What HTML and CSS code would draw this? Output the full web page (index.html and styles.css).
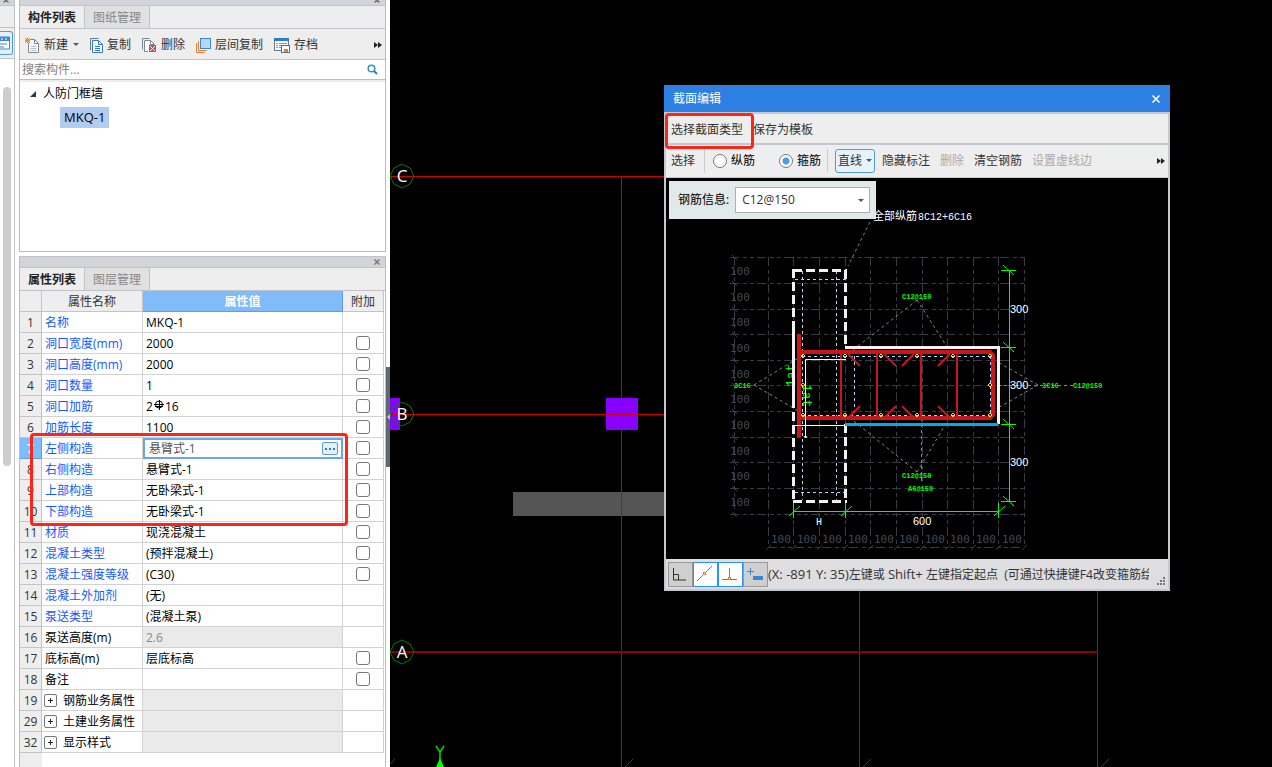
FILE: index.html
```html
<!DOCTYPE html>
<html lang="zh-CN">
<head>
    <meta charset="UTF-8">
    <meta name="viewport" content="width=device-width, initial-scale=1.0">
    <title>截面编辑</title>
    <link rel="stylesheet" href="styles.css">
</head>
<body>
    <!-- Edge of the navigation panel -->
    <aside class="nav-strip">
        <div class="panel-bar panel-bar-cut"><button class="bar-close" aria-label="关闭"><svg width="6" height="6" viewBox="0 0 6 6"><path d="M0.5 0.5L5.5 5.5M5.5 0.5L0.5 5.5"/></svg></button></div>
        <div class="nav-head"></div>
        <div class="nav-tools">
            <button class="nav-btn" aria-label="视图">
                <svg width="10" height="14" viewBox="0 0 10 14"><path d="M0 1h9.500v12H0" fill="#fff" stroke="#3c86d8"/><path d="M0 1h9v4H0z" fill="#3c86d8"/><path d="M1 3h2M5 3h2" stroke="#fff"/><path d="M0 8h7M0 11h4" stroke="#3c86d8"/></svg>
            </button>
        </div>
        <div class="nav-scroll"><div class="nav-thumb"></div></div>
    </aside>

    <div class="side">
        <!-- Component list -->
        <section class="panel panel-list">
            <div class="panel-bar panel-bar-cut"><button class="bar-close" aria-label="关闭"><svg width="6" height="6" viewBox="0 0 6 6"><path d="M0.5 0.5L5.5 5.5M5.5 0.5L0.5 5.5"/></svg></button></div>
            <div class="tabs">
                <button class="tab active">构件列表</button>
                <button class="tab">图纸管理</button>
            </div>
            <div class="toolbar">
                <button class="tool">
                    <svg width="15" height="15" viewBox="0 0 15 15"><path d="M3.5 1.500h6l4 4v9h-10z" fill="#fff" stroke="#7c8796"/><path d="M9.5 1.500v4h4" fill="none" stroke="#7c8796"/><path d="M5.500 8.500h6M5.500 10.500h6M5.500 12.500h6" stroke="#b8bfc8"/><path d="M0 0h5v5H0z" fill="#fbd9b4"/><path d="M0 0l5 5M5 0L0 5M2.500 0v5M0 2.500h5" stroke="#f08a24"/></svg>
                    新建
                    <svg width="6" height="4" viewBox="0 0 6 4"><path d="M0 0h6L3 3z" fill="#555"/></svg>
                </button>
                <button class="tool">
                    <svg width="13" height="15" viewBox="0 0 13 15"><path d="M0.500 12V0.500h8" fill="none" stroke="#6b7a8c"/><path d="M2.500 2.500h6l4 4v8h-10z" fill="#fff" stroke="#2f7bd2"/><path d="M8.500 2.500v4h4" fill="none" stroke="#2f7bd2"/><path d="M5 8.500h5M5 10.500h5M5 12.500h5" stroke="#2f7bd2"/></svg>
                    复制
                </button>
                <button class="tool">
                    <svg width="15" height="15" viewBox="0 0 15 15"><path d="M0.500 11.500v-11h7" fill="none" stroke="#7c8796"/><path d="M6 13.500H2.500v-11h6l4 4" fill="#fff" stroke="#7c8796"/><path d="M8.500 2.500v4h4" fill="none" stroke="#7c8796"/><rect x="7" y="7" width="7" height="7" fill="#d4454a"/><path d="M8 8l5 5M13 8l-5 5" stroke="#fff"/></svg>
                    删除
                </button>
                <button class="tool">
                    <svg width="15" height="15" viewBox="0 0 15 15"><path d="M0.500 5v9.500h8M2.500 3v9.500h8" fill="none" stroke="#ee8130"/><rect x="4.500" y="0.500" width="10" height="10" fill="#b5d7fb" stroke="#3c86d8"/></svg>
                    层间复制
                </button>
                <button class="tool">
                    <svg width="16" height="15" viewBox="0 0 16 15"><rect x="0.500" y="0.500" width="14" height="12" fill="#fff" stroke="#6b7a8c"/><rect width="15" height="3" fill="#2f7bd2"/><path d="M2 5.500h2M5 5.500h8M2 7.500h2M5 7.500h2M2 9.500h2M5 9.500h2" stroke="#6b9bd0"/><rect x="7.500" y="7.500" width="8" height="7" fill="#fff" stroke="#5b6f88"/><rect x="10" y="11" width="4" height="3" fill="#ee7b22"/></svg>
                    存档
                </button>
                <button class="tool-more" aria-label="更多"><svg width="8" height="6" viewBox="0 0 8 6"><path d="M0 0l4 3-4 3zM4 0l4 3-4 3z" fill="#222"/></svg></button>
            </div>
            <div class="search">
                <input type="text" class="search-input" placeholder="搜索构件..." aria-label="搜索构件">
                <svg width="11" height="11" viewBox="0 0 11 11"><circle cx="4.500" cy="4.500" r="3.300" fill="none" stroke="#2e90cf" stroke-width="1.500"/><path d="M7 7l3 3" stroke="#2e7fc0" stroke-width="2"/></svg>
            </div>
            <ul class="tree">
                <li class="tree-root">
                    <svg width="6" height="6" viewBox="0 0 6 6"><path d="M6 0v6H0z" fill="#333"/></svg>
                    人防门框墙
                </li>
                <li class="tree-leaf"><span class="selected">MKQ-1</span></li>
            </ul>
        </section>

        <!-- Property list -->
        <section class="panel panel-props">
            <div class="panel-bar"><button class="bar-close" aria-label="关闭"><svg width="6" height="6" viewBox="0 0 6 6"><path d="M0.5 0.5L5.5 5.5M5.5 0.5L0.5 5.5"/></svg></button></div>
            <div class="tabs">
                <button class="tab active">属性列表</button>
                <button class="tab">图层管理</button>
            </div>
            <div class="props-body">
                <table class="props">
                    <thead>
                        <tr><th class="num"></th><th class="name">属性名称</th><th class="value current">属性值</th><th class="extra">附加</th></tr>
                    </thead>
                    <tbody>
                        <tr><th>1</th><td class="blue">名称</td><td>MKQ-1</td><td></td></tr>
                        <tr><th>2</th><td class="blue">洞口宽度(mm)</td><td>2000</td><td class="check"><input type="checkbox" aria-label="附加 洞口宽度"></td></tr>
                        <tr><th>3</th><td class="blue">洞口高度(mm)</td><td>2000</td><td class="check"><input type="checkbox" aria-label="附加 洞口高度"></td></tr>
                        <tr><th>4</th><td class="blue">洞口数量</td><td>1</td><td class="check"><input type="checkbox" aria-label="附加 洞口数量"></td></tr>
                        <tr><th>5</th><td class="blue">洞口加筋</td><td>2<svg class="rebar" width="12" height="11" viewBox="0 0 12 11"><ellipse cx="6" cy="4.500" rx="3.500" ry="3.500" fill="none" stroke="#000"/><path d="M6.500 0v10M1 4.500h10M2 6.500h8" stroke="#000"/></svg>16</td><td class="check"><input type="checkbox" aria-label="附加 洞口加筋"></td></tr>
                        <tr><th>6</th><td class="blue">加筋长度</td><td>1100</td><td class="check"><input type="checkbox" aria-label="附加 加筋长度"></td></tr>
                        <tr><th class="current">7</th><td class="blue">左侧构造</td><td class="editing"><div class="edit-box"><input type="text" class="edit-input" value="悬臂式-1" aria-label="左侧构造"><button class="edit-more" aria-label="选择"><svg width="10" height="2" viewBox="0 0 10 2"><path d="M0 1h2M4 1h2M8 1h2" stroke="#2c7cc4" stroke-width="2"/></svg></button></div></td><td class="check"><input type="checkbox" aria-label="附加 左侧构造"></td></tr>
                        <tr><th>8</th><td class="blue">右侧构造</td><td>悬臂式-1</td><td class="check"><input type="checkbox" aria-label="附加 右侧构造"></td></tr>
                        <tr><th>9</th><td class="blue">上部构造</td><td>无卧梁式-1</td><td class="check"><input type="checkbox" aria-label="附加 上部构造"></td></tr>
                        <tr><th>10</th><td class="blue">下部构造</td><td>无卧梁式-1</td><td class="check"><input type="checkbox" aria-label="附加 下部构造"></td></tr>
                        <tr><th>11</th><td class="blue">材质</td><td>现浇混凝土</td><td class="check"><input type="checkbox" aria-label="附加 材质"></td></tr>
                        <tr><th>12</th><td class="blue">混凝土类型</td><td>(预拌混凝土)</td><td class="check"><input type="checkbox" aria-label="附加 混凝土类型"></td></tr>
                        <tr><th>13</th><td class="blue">混凝土强度等级</td><td>(C30)</td><td class="check"><input type="checkbox" aria-label="附加 混凝土强度等级"></td></tr>
                        <tr><th>14</th><td class="blue">混凝土外加剂</td><td>(无)</td><td></td></tr>
                        <tr><th>15</th><td class="blue">泵送类型</td><td>(混凝土泵)</td><td></td></tr>
                        <tr><th>16</th><td>泵送高度(m)</td><td class="locked">2.6</td><td></td></tr>
                        <tr><th>17</th><td>底标高(m)</td><td>层底标高</td><td class="check"><input type="checkbox" aria-label="附加 底标高"></td></tr>
                        <tr><th>18</th><td>备注</td><td></td><td class="check"><input type="checkbox" aria-label="附加 备注"></td></tr>
                        <tr><th>19</th><td class="group"><div class="group-name"><button class="expand" aria-label="展开"><svg width="7" height="7" viewBox="0 0 7 7"><path d="M3.500 1v5M1 3.500h5" stroke="#222"/></svg></button>钢筋业务属性</div></td><td class="locked"></td><td></td></tr>
                        <tr><th>29</th><td class="group"><div class="group-name"><button class="expand" aria-label="展开"><svg width="7" height="7" viewBox="0 0 7 7"><path d="M3.500 1v5M1 3.500h5" stroke="#222"/></svg></button>土建业务属性</div></td><td class="locked"></td><td></td></tr>
                        <tr><th>32</th><td class="group"><div class="group-name"><button class="expand" aria-label="展开"><svg width="7" height="7" viewBox="0 0 7 7"><path d="M3.500 1v5M1 3.500h5" stroke="#222"/></svg></button>显示样式</div></td><td class="locked"></td><td></td></tr>
                    </tbody>
                </table>
                <div class="props-rest"></div>
            </div>
            <div class="mark mark-rows"></div>
        </section>
    </div>

    <div class="splitter"><button class="splitter-handle" aria-label="收起"><svg width="3" height="6" viewBox="0 0 3 6"><path d="M3 0v6L0 3z" fill="#c4c9ce"/></svg></button></div>

    <main class="canvas">
        <!-- Plan view with the axis grid -->
        <svg class="plan" width="100%" height="100%">
            <g transform="translate(-390 0)">
                <rect x="390" y="398" width="10" height="32" fill="#8800ff"/>
                <rect x="606" y="398" width="32" height="32" fill="#8800ff"/>
                <rect x="513" y="492" width="180" height="24" fill="#555"/>
                <g stroke="#d00000">
                    <path d="M390 176.500H1097M390 414.500H1097M621.500 176V652M859.500 176V652M1097.500 176V652"/>
                </g>
                <path d="M390 652H1098" stroke="#8c0000" stroke-width="2"/>
                <path d="M621.500 653V767M859.500 653V767M1097.500 653V767M390 764l5-5M625 767l8-8M863 767l8-8M1101 767l8-8" stroke="#006400" fill="none"/>
                <g fill="none" stroke="#008000">
                    <path id="axis" d="M402 164l8 4 4 8-4 8-8 4-8-4-4-8 4-8z"/>
                    <use href="#axis" y="238"/>
                    <use href="#axis" y="476"/>
                </g>
                <g class="axis-label">
                    <text x="402" y="182">C</text>
                    <text x="402" y="420">B</text>
                    <text x="402" y="658">A</text>
                </g>
                <path d="M436 746l4 6 4-6M440 752v8" fill="none" stroke="#00e000" stroke-width="1.500"/>
                <path d="M440 758l4 9h-8z" fill="#00ff00"/>
            </g>
        </svg>

        <!-- Section editor window -->
        <div class="dialog">
            <div class="dialog-title">
                <span>截面编辑</span>
                <button class="dialog-close" aria-label="关闭"><svg width="8" height="8" viewBox="0 0 8 8"><path d="M0.500 0.500l7 7M7.500 0.500l-7 7" stroke="#fff" stroke-width="1.500"/></svg></button>
            </div>
            <div class="dialog-menu">
                <button class="menu-btn">选择截面类型</button>
                <button class="menu-btn">保存为模板</button>
            </div>
            <div class="dialog-tools">
                <button class="menu-btn">选择</button>
                <span class="sep"></span>
                <label class="radio"><input type="radio" name="bar">纵筋</label>
                <label class="radio"><input type="radio" name="bar" checked>箍筋</label>
                <span class="sep"></span>
                <button class="line-btn">直线 <svg width="6" height="4" viewBox="0 0 6 4"><path d="M0 0h6L3 3z" fill="#555"/></svg></button>
                <button class="menu-btn">隐藏标注</button>
                <button class="menu-btn" disabled>删除</button>
                <button class="menu-btn">清空钢筋</button>
                <button class="menu-btn" disabled>设置虚线边</button>
                <button class="tool-more" aria-label="更多"><svg width="8" height="6" viewBox="0 0 8 6"><path d="M0 0l4 3-4 3zM4 0l4 3-4 3z" fill="#222"/></svg></button>
            </div>
            <div class="section-view">
                <svg class="section" width="502" height="381" viewBox="666 178 502 381">
                    <!-- background grid, 100 mm -->
                    <g stroke="#353c49" fill="none">
                        <path stroke-dasharray="9 4 4 3 4 3" d="M768.500 257V547M793.500 257V547M819.500 257V547M845.500 257V547M870.500 257V547M896.500 257V547M922.500 257V547M947.500 257V547M973.500 257V547M998.500 257V547M1024.500 257V547"/>
                        <path stroke-dasharray="9 4 4 3 4 3" d="M730 257.500H1024M730 283.500H1024M730 309.500H1024M730 334.500H1024M730 360.500H1024M730 385.500H1024M730 411.500H1024M730 437.500H1024M730 462.500H1024M730 488.500H1024M730 514.500H1024"/>
                        <path stroke-dasharray="9 4 4 3 4 3" d="M734.500 257V514M768 547.500H1024"/>
                        <path d="M732 255l5 5M732 281l5 5M732 307l5 5M732 332l5 5M732 358l5 5M732 383l5 5M732 409l5 5M732 435l5 5M732 460l5 5M732 486l5 5M732 512l5 5"/>
                        <path d="M766 550l5-5M791 550l5-5M817 550l5-5M843 550l5-5M868 550l5-5M894 550l5-5M920 550l5-5M945 550l5-5M971 550l5-5M996 550l5-5M1022 550l5-5"/>
                    </g>
                    <g class="grid-text">
                        <text x="730" y="275">100</text><text x="730" y="301">100</text><text x="730" y="326">100</text><text x="730" y="352">100</text><text x="730" y="378">100</text>
                        <text x="730" y="403">100</text><text x="730" y="429">100</text><text x="730" y="455">100</text><text x="730" y="480">100</text><text x="730" y="506">100</text>
                        <text x="771" y="543">100</text><text x="797" y="543">100</text><text x="822" y="543">100</text><text x="848" y="543">100</text><text x="874" y="543">100</text>
                        <text x="899" y="543">100</text><text x="925" y="543">100</text><text x="950" y="543">100</text><text x="976" y="543">100</text><text x="1002" y="543">100</text>
                    </g>

                    <!-- leaders -->
                    <g stroke="#858585" fill="none" stroke-dasharray="3 3">
                        <path d="M870 222L848 266M917 300L848 354M917 300L951 353M917 472L850 418M917 472L951 415M754 385L800 357M754 385L800 412M1038 385L996 361M1038 385L996 409M992 385.500H1073M921.500 412V484"/>
                    </g>

                    <!-- cover lines -->
                    <path d="M802.500 271V500M836.500 271V500M854.500 356V422M990.500 350V420M795 279.500H846M795 492.500H846M802 356.500H992M802 415.500H992" stroke="#b4d2f2" fill="none" stroke-dasharray="3 3"/>

                    <!-- stirrups -->
                    <g stroke="#c8161d" fill="none">
                        <path d="M799 334V437" stroke-width="4"/>
                        <path d="M797 352H990l3 3V415l-3 3H797" stroke-width="4"/>
                        <path d="M841 352V418M877 352V418M921 352V418M957 352V418" stroke-width="2"/>
                        <path d="M848 354l12 12M884 354l12 12M914 354l-12 12M950 354l-12 12M848 418l12-12M884 418l12-12M914 418l-12-12M950 418l-12-12" stroke-width="2"/>
                    </g>
                    <g stroke="#ffd820" fill="none">
                        <path d="M845 354l2 2-2 2-2-2zM881 354l2 2-2 2-2-2zM917 354l2 2-2 2-2-2zM953 354l2 2-2 2-2-2zM990 354l2 2-2 2-2-2zM803 354l2 2-2 2-2-2z"/>
                        <path d="M845 413l2 2-2 2-2-2zM881 413l2 2-2 2-2-2zM917 413l2 2-2 2-2-2zM953 413l2 2-2 2-2-2zM990 413l2 2-2 2-2-2zM803 413l2 2-2 2-2-2z"/>
                        <path d="M990 383l2 2-2 2-2-2zM803 383l2 2-2 2-2-2z"/>
                    </g>

                    <g class="bar-text">
                        <text x="902" y="299">C12@150</text>
                        <text x="902" y="478">C12@150</text>
                        <text x="908" y="491">A6@150</text>
                        <text x="734" y="388">3C16</text>
                        <text x="1042" y="388">3C16</text>
                        <text x="1073" y="388">C12@150</text>
                        <text class="anchor" transform="translate(795 387) rotate(-90)">1at</text>
                        <text class="anchor" transform="translate(803 384) rotate(90)">1at</text>
                    </g>

                    <!-- concrete outline -->
                    <g stroke="#f2f2f2" stroke-width="3" fill="none">
                        <path d="M793.500 269V502M793 270.500H847M845.500 270V347M845.500 424V502M793 501.500H847" stroke-dasharray="9 4"/>
                        <path d="M793.500 330V408M845 347.500H998.500V424"/>
                        <path d="M845 424.500H998" stroke="#00a8ec"/>
                    </g>
                    <path d="M805.500 438V359.500H846M793 425.500H845M804 436l1.500 2 1.500-2" stroke="#fff" fill="none"/>

                    <!-- dimensions -->
                    <g stroke="#00ff00" fill="none">
                        <path d="M1009.500 270V502M1001 270.500h15M1001 347.500h15M1001 424.500h15M1001 501.500h15M1003 265l11 10M1003 342l11 10M1003 419l11 10M1003 496l11 10"/>
                        <path d="M793 511.500H998M793.500 503v15M845.500 503v15M998.500 503v15M789 516l11-10M841 516l11-10M994 516l11-10"/>
                    </g>
                    <g class="dim-text">
                        <text x="1010" y="313">300</text>
                        <text x="1010" y="389">300</text>
                        <text x="1010" y="466">300</text>
                        <text x="913" y="525">600</text>
                        <text x="816" y="525" class="mono">H</text>
                        <text x="873" y="220" class="note">全部纵筋</text>
                        <text x="918" y="220" class="mono">8C12+6C16</text>
                    </g>
                </svg>
                <div class="bar-info">
                    <label for="barInfo">钢筋信息:</label>
                    <div class="select-box">
                        <select id="barInfo"><option>C12@150</option></select>
                        <svg width="6" height="4" viewBox="0 0 6 4"><path d="M0 0h6L3 3z" fill="#555"/></svg>
                    </div>
                </div>
            </div>
            <div class="status">
                <button class="snap" aria-label="正交"><svg width="25" height="25" viewBox="0 0 25 25"><path d="M5.500 6v12H18M5.500 12.500h5V18" fill="none" stroke="#333"/></svg></button>
                <button class="snap on" aria-label="中点"><svg width="25" height="25" viewBox="0 0 25 25"><path d="M4 19L19 4" stroke="#3c86d8"/><rect x="10.500" y="10.500" width="2" height="2" fill="#fff" stroke="#ee7b22"/></svg></button>
                <button class="snap on" aria-label="垂点"><svg width="25" height="25" viewBox="0 0 25 25"><path d="M4 17.500h15M11.500 6v11" stroke="#3c86d8"/><rect x="10.500" y="15.500" width="2" height="2" fill="#fff" stroke="#ee7b22"/></svg></button>
                <button class="snap" aria-label="动态输入"><svg width="25" height="25" viewBox="0 0 25 25"><path d="M4 9.500h7M7.500 6v7" stroke="#3c86d8"/><rect x="10" y="14" width="10" height="4" fill="#3c86d8"/></svg></button>
                <div class="status-text"><span class="latin">(X: -891 Y: 35)</span>左键或 <span class="latin">Shift+ </span> 左键指定起点&nbsp; (可通过快捷键F4改变箍筋绘</div>
                <svg class="grip" width="9" height="9" viewBox="0 0 9 9"><path d="M6 0h2v2H6zM3 3h2v2H3zM6 3h2v2H6zM0 6h2v2H0zM3 6h2v2H3zM6 6h2v2H6z" fill="#6f7782"/></svg>
            </div>
            <div class="mark mark-menu"></div>
        </div>
    </main>
</body>
</html>
```

FILE: styles.css
```css
* {
    box-sizing: border-box;
}

body {
    margin: 0;
    height: 100vh;
    display: flex;
    overflow: hidden;
    background-color: #fff;
    color: #000;
    font-family: "Open Sans", "Noto Sans CJK SC", sans-serif;
    font-size: 12px;
    line-height: 18px;
}

button,
input,
select {
    font: inherit;
    color: inherit;
    margin: 0;
    padding: 0;
    border: none;
    background: none;
}

svg {
    display: block;
    flex: none;
}

/* Navigation strip */
.nav-strip {
    flex: none;
    width: 15px;
    margin-right: 4px;
    display: flex;
    flex-direction: column;
    border-right: 1px solid #c0c3cc;
    overflow: hidden;
}

.nav-head {
    height: 22px;
    background-color: #eee;
    border-bottom: 1px solid #c0c3cc;
}

.nav-tools {
    height: 31px;
    padding-top: 3px;
    background-color: #eee;
    border-bottom: 1px solid #c0c3cc;
}

.nav-btn {
    display: flex;
    align-items: center;
    width: 13px;
    height: 24px;
    border: 1px solid #4a9be8;
    border-left: none;
    border-radius: 0 3px 3px 0;
    background-color: #e4f1fd;
}

.nav-scroll {
    flex: 1;
    padding: 28px 0 0 3px;
}

.nav-thumb {
    width: 8px;
    height: 379px;
    border-radius: 4px;
    background-color: #cdcdcd;
}

/* Docked panels */
.side {
    flex: none;
    width: 367px;
    display: flex;
    flex-direction: column;
    gap: 4px;
}

.panel {
    border: 1px solid #b9bcc4;
    border-top: none;
}

.panel-list {
    flex: none;
    height: 252px;
    display: flex;
    flex-direction: column;
}

.panel-props {
    position: relative;
    flex: 1;
    display: flex;
    flex-direction: column;
    border-bottom: none;
    min-height: 0;
}

.panel-bar {
    display: flex;
    flex: none;
    align-items: center;
    justify-content: flex-end;
    height: 12px;
    padding: 0 5px;
    background-color: #d2d4da;
    border-bottom: 1px solid #c0c3cc;
}

/* only the lower half of the bar is in view */
.panel-bar-cut {
    height: 6px;
    align-items: flex-end;
    padding-bottom: 2px;
    overflow: hidden;
}

.panel-props .panel-bar {
    border-top: 1px solid #c0c3cc;
}

.bar-close svg {
    stroke: #777;
    stroke-width: 1.5;
}

.tabs {
    display: flex;
    flex: none;
    height: 23px;
    background-color: #eee;
    border-bottom: 1px solid #c0c3cc;
}

.tab {
    width: 65px;
    padding-top: 2px;
    border-right: 1px solid #c0c3cc;
    background-color: #e0e0e0;
    color: #888;
}

.tab.active {
    background-color: #eee;
    color: #222;
    font-weight: bold;
}

.toolbar {
    display: flex;
    flex: none;
    align-items: center;
    gap: 11px;
    height: 31px;
    padding: 2px 3px 0 5px;
    background-color: #eee;
    border-bottom: 1px solid #c0c3cc;
}

.tool {
    display: flex;
    align-items: center;
    gap: 4px;
    color: #333;
}

.tool:first-child svg:last-child {
    margin-left: 1px;
}

.tool-more {
    margin-left: auto;
}

.search {
    display: flex;
    flex: none;
    align-items: center;
    height: 20px;
    padding: 0 7px 0 2px;
    border-bottom: 1px solid #b9bcc4;
}

.search-input {
    flex: 1;
    outline: none;
}

.search-input::placeholder {
    color: #808080;
}

.tree {
    list-style: none;
    margin: 0;
    padding: 2px 0 0;
    flex: 1;
    border-top: 2px solid #eee;
}

.tree-root {
    display: flex;
    align-items: center;
    gap: 7px;
    height: 20px;
    padding-left: 10px;
}

.tree-leaf {
    display: flex;
    padding: 3px 0 0 40px;
}

.selected {
    height: 21px;
    padding: 0 4px;
    line-height: 21px;
    background-color: #b0ccf0;
    font-size: 13px;
}

/* Property table */
.props-body {
    display: flex;
    flex-direction: column;
    flex: 1;
    min-height: 0;
}

.props {
    width: 364px;
    flex: none;
    table-layout: fixed;
    border-collapse: separate;
    border-spacing: 0;
}

.props th,
.props td {
    height: 21px;
    padding: 2px 3px 0;
    border-right: 1px solid #d2d2d2;
    border-bottom: 1px solid #d2d2d2;
    text-align: left;
    font-weight: normal;
    line-height: 18px;
    white-space: nowrap;
}

.props th {
    background-color: #eee;
    color: #333;
    text-align: center;
    border-color: #c4c4c8;
}

.props .num {
    width: 22px;
}

.props tbody th {
    padding: 2px 0 0;
}

.props .name {
    width: 101px;
}

.props .value {
    width: 200px;
}

.props th.current {
    background-color: #80bbfa;
    border-color: #5ba1e8;
    color: #fff;
    font-weight: bold;
}

.props .blue {
    color: #1459ff;
}

.props .locked {
    background-color: #eaeaea;
    color: #888;
}

.props .check {
    padding: 0 0 0 13px;
}

.props input[type="checkbox"] {
    appearance: none;
    display: block;
    width: 14px;
    height: 14px;
    border: 1px solid #777;
    border-radius: 3px;
    background-color: #fff;
}

.rebar {
    display: inline-block;
    vertical-align: 0;
}

.props .editing {
    padding: 0;
    border: none;
}

.edit-box {
    display: flex;
    align-items: center;
    height: 21px;
    padding: 0 3px 0 4px;
    border: 2px solid #6ba7e8;
}

.edit-input {
    flex: 1;
    min-width: 0;
    height: 17px;
    color: #555;
    outline: none;
}

.edit-more {
    display: flex;
    align-items: center;
    justify-content: center;
    width: 16px;
    height: 13px;
    border: 1px solid #5b9bdc;
    border-radius: 2px;
    background-color: #e4f1fd;
}

.props .group {
    padding-left: 2px;
}

.group-name {
    display: flex;
    align-items: center;
    gap: 6px;
}

.expand {
    display: flex;
    align-items: center;
    justify-content: center;
    width: 13px;
    height: 13px;
    margin-bottom: 2px;
    border: 1px solid #777;
    border-radius: 2px;
    background-color: #fff;
}

.props-rest {
    flex: 1;
    width: 22px;
    background-color: #eee;
}

/* Red highlight frames */
.mark {
    position: absolute;
    border: 3px solid #ff2416;
    border-radius: 4px;
    pointer-events: none;
}

.mark-rows {
    left: 10px;
    top: 177px;
    width: 318px;
    height: 93px;
}

.mark-menu {
    left: 1px;
    top: 28px;
    width: 89px;
    height: 36px;
}

.splitter {
    flex: none;
    width: 4px;
    padding-top: 367px;
}

.splitter-handle {
    display: flex;
    align-items: center;
    justify-content: flex-end;
    width: 4px;
    height: 100px;
    background-color: #5f6973;
}

/* Drawing area */
.canvas {
    position: relative;
    flex: 1;
    min-width: 0;
    overflow: hidden;
    background-color: #000;
}

.plan {
    width: 100%;
    height: 100%;
}

.axis-label {
    fill: #fff;
    font-size: 17px;
    text-anchor: middle;
}

.dialog {
    position: absolute;
    left: 274px;
    top: 85px;
    width: 506px;
    background-color: #c3c8d2;
}

.dialog-title {
    display: flex;
    align-items: center;
    justify-content: space-between;
    height: 27px;
    padding: 0 10px 0 9px;
    background-color: #2d7fe1;
    color: #fff;
}

.dialog-menu,
.dialog-tools {
    display: flex;
    align-items: center;
    margin: 2px 2px 0;
    background-color: #eee;
}

.dialog-menu {
    height: 29px;
    padding: 2px 5px 0;
    gap: 10px;
}

.dialog-tools {
    height: 32px;
    padding: 0 3px 0 5px;
}

.menu-btn {
    color: #333;
    white-space: nowrap;
}

.menu-btn:disabled {
    color: #aaa;
}

.dialog-tools .menu-btn + .menu-btn {
    margin-left: 10px;
}

.sep {
    width: 1px;
    height: 24px;
    margin: 0 8px 0 9px;
    background-color: #ccc;
}

.radio {
    display: flex;
    align-items: center;
    gap: 4px;
}

.radio + .radio {
    margin-left: 24px;
}

.radio + .sep {
    margin: 0 7px 0 6px;
}

.radio input {
    appearance: none;
    width: 14px;
    height: 14px;
    border: 1px solid #777;
    border-radius: 50%;
    background-color: #fff;
}

.radio input:checked {
    background: radial-gradient(circle, #4a9cf2 3px, #fff 4px);
}

.line-btn {
    display: flex;
    align-items: center;
    gap: 4px;
    height: 24px;
    margin-right: 7px;
    padding: 0 2px;
    border: 1px solid #4a9be8;
    border-radius: 3px;
    background-color: #e6f2fd;
    color: #333;
}

.section-view {
    position: relative;
    margin: 1px 2px 0;
    background-color: #000;
}

.bar-info {
    position: absolute;
    left: 3px;
    top: 3px;
    display: flex;
    align-items: center;
    gap: 6px;
    height: 38px;
    padding: 0 6px 0 9px;
    background-color: #e1e9eb;
}

.select-box {
    position: relative;
}

.select-box select {
    appearance: none;
    display: block;
    width: 135px;
    height: 26px;
    padding: 0 6px;
    border: 1px solid #b0b0b0;
    background-color: #fff;
    color: #333;
}

.select-box svg {
    position: absolute;
    right: 6px;
    top: 12px;
}

.grid-text {
    fill: #414958;
    font-family: "DejaVu Sans Mono", monospace;
    font-size: 11px;
}

.dim-text {
    fill: #fff;
    font-family: "Liberation Sans", sans-serif;
    font-size: 11px;
}

.dim-text .mono {
    font-family: "Liberation Mono", monospace;
    font-size: 10px;
}

.dim-text .note {
    font-family: "Noto Sans CJK SC", sans-serif;
    font-size: 11px;
}

.bar-text {
    fill: #00ff00;
    font-family: "Liberation Mono", monospace;
    font-size: 7px;
    font-weight: bold;
}

.bar-text .anchor {
    font-size: 13px;
    font-weight: normal;
}

.status {
    display: flex;
    align-items: center;
    height: 30px;
    margin: 0 2px;
    padding: 0 2px;
    background-color: #dedee0;
}

.snap {
    flex: none;
    width: 25px;
    height: 25px;
    border: 1px solid #999;
    background-color: #cfcfcf;
}

.snap svg {
    margin: -1px;
}

.snap.on {
    border-color: #2a92f5;
    background-color: #fff;
}

.status-text {
    flex: 1;
    overflow: hidden;
    color: #333;
    white-space: nowrap;
}

.status-text .latin {
    font-size: 13px;
}

.grip {
    align-self: flex-end;
    margin: 0 0 3px 8px;
}

.dialog::after {
    content: "";
    display: block;
    height: 2px;
}
```
